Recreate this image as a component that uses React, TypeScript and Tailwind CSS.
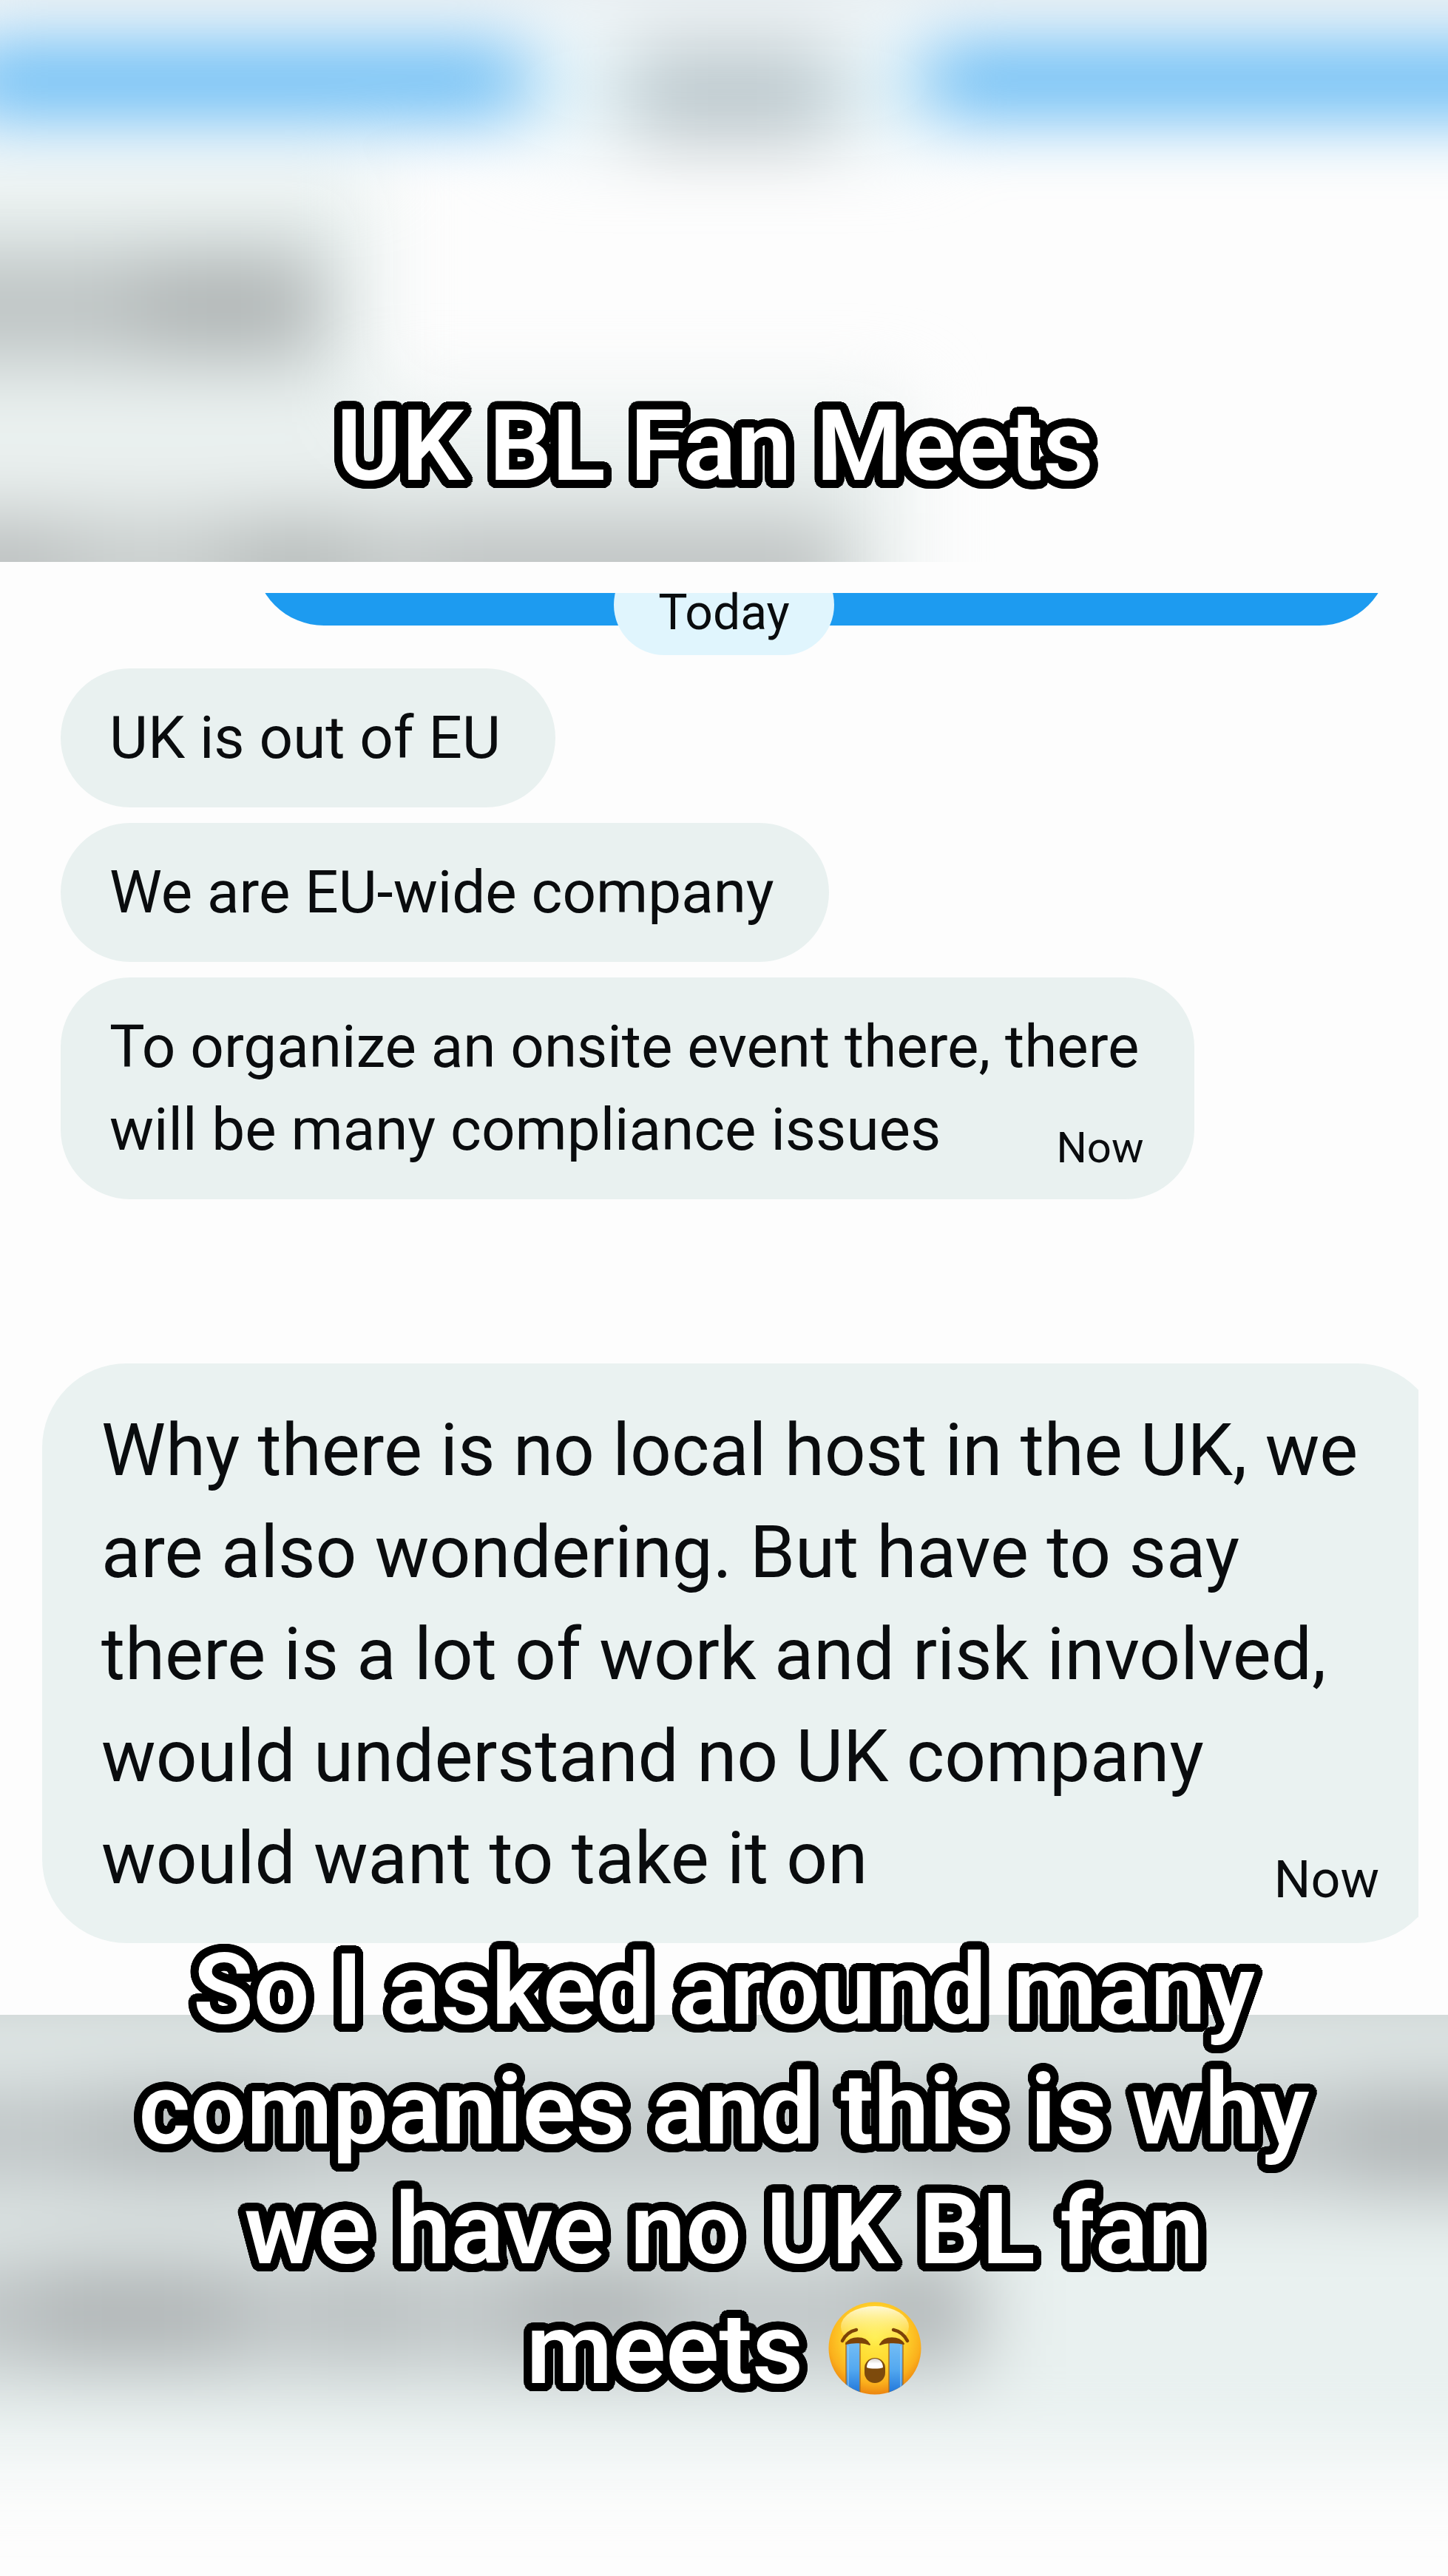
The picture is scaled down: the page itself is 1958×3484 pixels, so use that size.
import React from 'react';

type Message = {
  lines: string[];
  time?: string;
};

const messages: Message[] = [
  { lines: ['UK is out of EU'] },
  { lines: ['We are EU-wide company'] },
  {
    lines: ['To organize an onsite event there, there', 'will be many compliance issues'],
    time: 'Now',
  },
];

const reply: Message = {
  lines: [
    'Why there is no local host in the UK, we',
    'are also wondering. But have to say',
    'there is a lot of work and risk involved,',
    'would understand no UK company',
    'would want to take it on',
  ],
  time: 'Now',
};

const caption = ['So I asked around many', 'companies and this is why', 'we have no UK BL fan'];

// Round black outline made of shadows placed on a circle
function outline(radius: number) {
  const steps = 40;
  return Array.from({ length: steps }, (_, i) => {
    const a = (i / steps) * Math.PI * 2;
    return `${(Math.cos(a) * radius).toFixed(1)}px ${(Math.sin(a) * radius).toFixed(1)}px 0 #000`;
  }).join(', ');
}

const outlineStyle = { textShadow: outline(11) };

function CryingFace() {
  return (
    <svg viewBox="0 0 126 126" className="mb-1 inline-block size-[126px]" role="img" aria-label="Loudly crying face">
      <defs>
        <radialGradient id="face" cx="0.5" cy="0.38" r="0.64">
          <stop offset="0" stopColor="#ffee4a" />
          <stop offset="0.45" stopColor="#ffd92f" />
          <stop offset="0.78" stopColor="#fbb01c" />
          <stop offset="1" stopColor="#e97f0e" />
        </radialGradient>
        <linearGradient id="shine" x1="0" y1="0" x2="0" y2="1">
          <stop offset="0" stopColor="#fffbe0" stopOpacity="0.95" />
          <stop offset="1" stopColor="#fff56b" stopOpacity="0" />
        </linearGradient>
        <linearGradient id="tear" x1="0" y1="0" x2="0" y2="1">
          <stop offset="0" stopColor="#74bdf5" />
          <stop offset="0.5" stopColor="#54a9f0" />
          <stop offset="1" stopColor="#1c72d8" />
        </linearGradient>
        <linearGradient id="teeth" x1="0" y1="0" x2="0" y2="1">
          <stop offset="0" stopColor="#d8d3cc" />
          <stop offset="0.5" stopColor="#ffffff" />
        </linearGradient>
        <clipPath id="disc">
          <circle cx="63" cy="63" r="62.5" />
        </clipPath>
      </defs>
      <circle cx="63" cy="63" r="62.5" fill="url(#face)" />
      <ellipse cx="63" cy="34" rx="46" ry="28" fill="url(#shine)" />
      <g clipPath="url(#disc)">
        <rect x="24" y="55" width="19" height="72" fill="url(#tear)" stroke="#b5731b" strokeWidth="1.5" />
        <rect x="82" y="55" width="19" height="72" fill="url(#tear)" stroke="#b5731b" strokeWidth="1.5" />
        <path d="M27 60V120M98 60V118" stroke="#9bd2fa" strokeWidth="2" opacity="0.5" />
      </g>
      <g fill="none" stroke="#7d4308" strokeLinecap="round">
        <path d="M19 53C23 45 29 40 38 38" strokeWidth="4.5" />
        <path d="M107 53C103 45 97 40 88 38" strokeWidth="4.5" />
      </g>
      <path d="M24 57C30 47 50 46 56 58C49 55 34 54 24 57Z" fill="#7d4308" stroke="#7d4308" strokeWidth="2" strokeLinejoin="round" />
      <path d="M102 57C96 47 76 46 70 58C77 55 92 54 102 57Z" fill="#7d4308" stroke="#7d4308" strokeWidth="2" strokeLinejoin="round" />
      <rect x="49" y="76" width="28" height="34" rx="14" fill="#7d4a0c" />
      <path d="M52 89C52 73 74 73 74 89C69 91 57 91 52 89Z" fill="url(#teeth)" />
    </svg>
  );
}

function TopBackdrop() {
  return (
    <svg viewBox="0 0 1958 760" preserveAspectRatio="none" className="absolute inset-0 h-full w-full" aria-hidden="true">
      <defs>
        <filter id="soft-top" filterUnits="userSpaceOnUse" x="-300" y="-300" width="2558" height="1360" colorInterpolationFilters="sRGB">
          <feGaussianBlur stdDeviation="52" />
        </filter>
      </defs>
      <rect width="1958" height="760" fill="#fdfdfd" />
      <g filter="url(#soft-top)">
        <rect x="-60" y="-300" width="2318" height="290" fill="#dde7ec" />
        <rect x="-60" y="74" width="2318" height="70" fill="#1d9bf0" />
        <rect x="710" y="50" width="542" height="140" fill="#e4f3f8" />
        <rect x="850" y="60" width="280" height="135" fill="#0f1419" opacity="0.2" />
        <rect x="-300" y="225" width="810" height="320" fill="#e9f1f0" />
        <rect x="-300" y="340" width="740" height="150" fill="#101010" opacity="0.2" />
        <rect x="190" y="345" width="240" height="130" fill="#101010" opacity="0.08" />
        <rect x="-300" y="535" width="1530" height="525" fill="#ebf1f0" />
        <rect x="-300" y="695" width="1450" height="150" fill="#101010" opacity="0.16" />
        <rect x="-300" y="710" width="390" height="120" fill="#101010" opacity="0.08" />
        <rect x="310" y="710" width="180" height="120" fill="#101010" opacity="0.1" />
        <rect x="570" y="720" width="560" height="120" fill="#101010" opacity="0.06" />
      </g>
    </svg>
  );
}

function BottomBackdrop() {
  return (
    <svg viewBox="0 0 1958 760" preserveAspectRatio="none" className="h-full w-full" aria-hidden="true">
      <defs>
        <filter id="soft-bottom" filterUnits="userSpaceOnUse" x="-300" y="-300" width="2558" height="1360" colorInterpolationFilters="sRGB">
          <feGaussianBlur stdDeviation="54" />
        </filter>
      </defs>
      <rect width="1958" height="760" fill="#fdfdfd" />
      <g filter="url(#soft-bottom)">
        <rect x="-300" y="-300" width="2558" height="905" fill="#e9f1f0" />
        <rect x="-300" y="-150" width="2558" height="135" fill="#101214" opacity="0.22" />
        <rect x="-300" y="85" width="2558" height="160" fill="#101214" opacity="0.19" />
        <rect x="120" y="100" width="260" height="120" fill="#101214" opacity="0.07" />
        <rect x="1220" y="100" width="160" height="120" fill="#101214" opacity="0.06" />
        <rect x="1820" y="100" width="438" height="130" fill="#101214" opacity="0.1" />
        <rect x="-300" y="325" width="1630" height="160" fill="#101214" opacity="0.19" />
        <rect x="40" y="340" width="280" height="130" fill="#101214" opacity="0.1" />
        <rect x="450" y="340" width="80" height="120" fill="#101214" opacity="0.06" />
        <rect x="700" y="330" width="200" height="130" fill="#101214" opacity="0.1" />
        <rect x="1190" y="330" width="120" height="130" fill="#101214" opacity="0.1" />
      </g>
    </svg>
  );
}

function Bubble({ message }: { message: Message }) {
  return (
    <li className="relative w-fit rounded-[94px] bg-[#e9f1f0] py-[38px] pr-[74px] pl-[66px] text-[80px] leading-[112px]">
      {message.lines.map(line => (
        <span key={line} className="block whitespace-nowrap">
          {line}
        </span>
      ))}
      {message.time && (
        <time className="absolute right-[68px] bottom-[30px] text-[58px] leading-[80px]">{message.time}</time>
      )}
    </li>
  );
}

export default function App() {
  return (
    <div className="min-h-screen overflow-hidden bg-[#fdfdfd] font-['Roboto',sans-serif] text-[#0a0c0e]">
      {/* Title */}
      <header className="relative overflow-hidden">
        <TopBackdrop />
        <h1
          className="relative pt-[523px] pr-[24px] pb-[75px] text-center text-[134px] leading-[162px] font-semibold text-white"
          style={outlineStyle}
        >
          UK BL Fan Meets
        </h1>
      </header>

      <main className="pt-[42px]">
        {/* End of the sent message, with the date on top of it */}
        <div className="relative h-[84px]">
          <div className="absolute inset-0 flex items-end justify-center overflow-hidden">
            <div className="absolute right-[80px] bottom-[40px] left-[344px] h-[188px] rounded-[94px] bg-[#1d9bf0]" />
            <div className="relative h-[136px] w-[298px] shrink-0 rounded-[68px] bg-[#e0f5fd]" />
          </div>
          <p className="relative text-center text-[66px] leading-[54px]">Today</p>
        </div>

        {/* Received messages */}
        <ul className="mt-[18px] flex flex-col gap-[21px] px-[82px]">
          {messages.map(m => (
            <Bubble key={m.lines[0]} message={m} />
          ))}
        </ul>

        {/* Enlarged reply, cut off by its right edge */}
        <div className="mt-[222px] mr-[40px] ml-[57px] overflow-hidden">
          <div className="relative -mr-[31px] rounded-[114px] bg-[#eaf2f1] pt-[49px] pb-[45px] pl-[80px] text-[98px] leading-[138px]">
            {reply.lines.map(line => (
              <span key={line} className="block whitespace-nowrap">
                {line}
              </span>
            ))}
            <time className="absolute right-[84px] bottom-[46px] text-[70px] leading-[80px]">{reply.time}</time>
          </div>
        </div>
      </main>

      {/* Caption */}
      <footer className="relative -mt-[17px]">
        <div className="absolute inset-x-0 top-[114px] bottom-0">
          <BottomBackdrop />
        </div>
        <p
          className="relative pb-[225px] text-center text-[134px] leading-[162px] font-semibold text-white"
          style={outlineStyle}
        >
          {caption.map(line => (
            <span key={line} className="block">
              {line}
            </span>
          ))}
          <span className="flex items-center justify-center gap-[34px]">
            meets
            <CryingFace />
          </span>
        </p>
      </footer>
    </div>
  );
}
